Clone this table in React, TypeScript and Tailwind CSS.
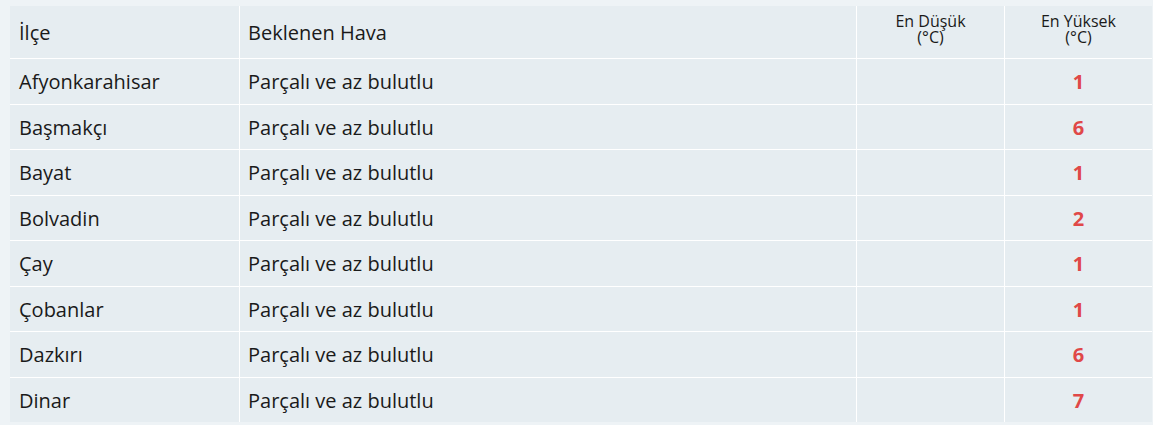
import React from "react";

const rows: [string, string][] = [
  ["Afyonkarahisar", "1"],
  ["Başmakçı", "6"],
  ["Bayat", "1"],
  ["Bolvadin", "2"],
  ["Çay", "1"],
  ["Çobanlar", "1"],
  ["Dazkırı", "6"],
  ["Dinar", "7"],
];

export default function App() {
  return (
    <div
      className="w-[1153px] h-[425px] overflow-hidden bg-[#eef3f6] pl-[10px] pt-[6px] text-[#1a1a1a]"
      style={{ fontFamily: '"Open Sans", "Noto Sans", sans-serif' }}
    >
      <div className="w-[1142px] bg-[#e6edf1]">
        <div className="flex h-[52px]">
          <div className="w-[229px] flex items-center pl-[9px] pt-[2px] text-[20px]">İlçe</div>
          <div className="w-[617px] border-l border-white flex items-center pl-[8px] pt-[2px] text-[20px]">
            Beklenen Hava
          </div>
          <div className="w-[148px] border-l border-white flex flex-col items-center pt-[7px] text-[16px] leading-[16px]">
            <span>En Düşük</span>
            <span>(°C)</span>
          </div>
          <div className="w-[148px] border-l border-white flex flex-col items-center pt-[7px] text-[16px] leading-[16px]">
            <span>En Yüksek</span>
            <span>(°C)</span>
          </div>
        </div>
        {rows.map(([name, hi]) => (
          <div key={name} className="flex h-[45.5px] border-t border-white">
            <div className="w-[229px] flex items-center pl-[9px] pt-[2px] text-[20px]">{name}</div>
            <div className="w-[617px] border-l border-white flex items-center pl-[8px] pt-[2px] text-[20px]">
              Parçalı ve az bulutlu
            </div>
            <div className="w-[148px] border-l border-white"></div>
            <div className="w-[148px] border-l border-white flex items-center justify-center pt-[2px] text-[20px] font-bold text-[#e04848]">
              {hi}
            </div>
          </div>
        ))}
      </div>
    </div>
  );
}
